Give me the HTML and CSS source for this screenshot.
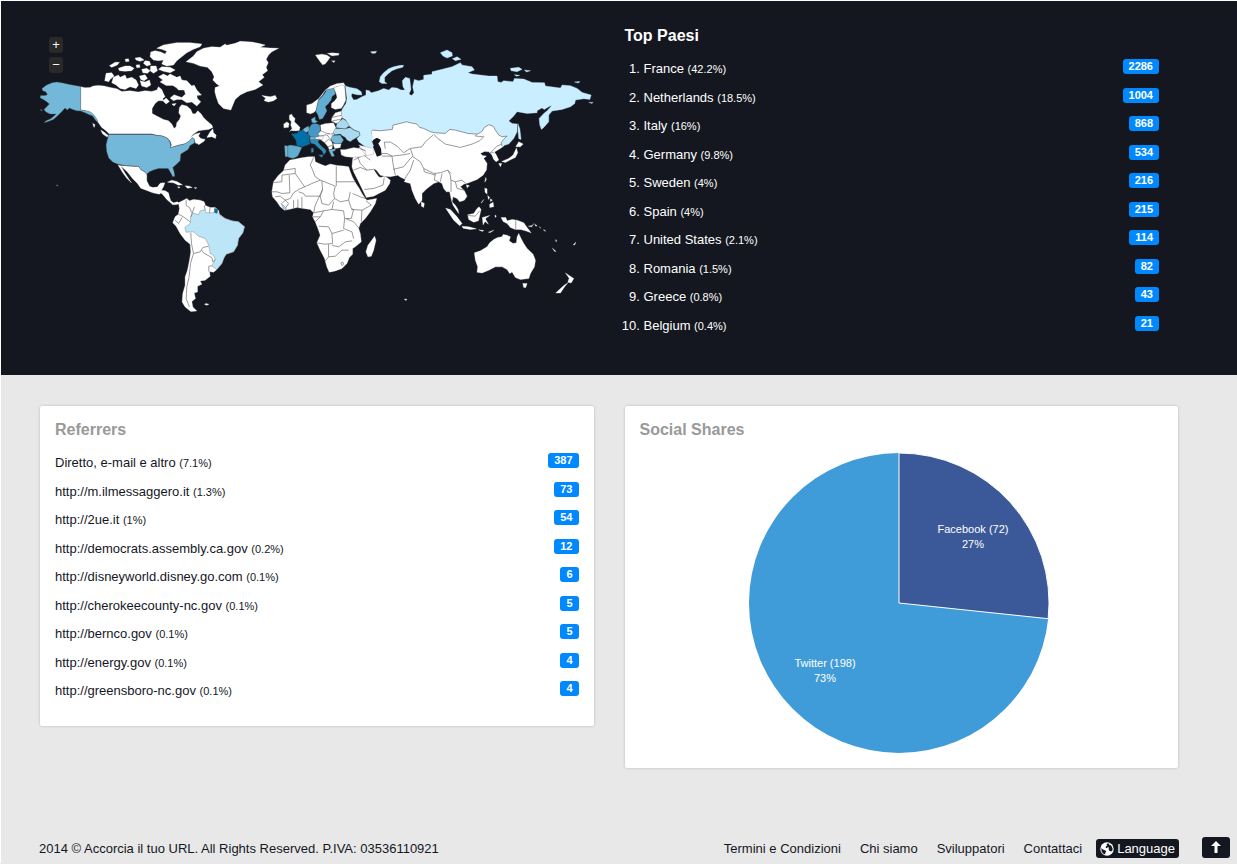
FILE: index.html
```html
<!DOCTYPE html>
<html lang="it">
<head>
<meta charset="utf-8">
<title>Statistiche</title>
<link rel="stylesheet" href="styles.css">
</head>
<body>
<section class="hero">
  <div class="columns">
    <div class="map">
      <svg class="map-art" viewBox="40 30 553 300" role="img" aria-label="Mappa dei paesi">
        <!-- North America -->
        <g transform="translate(30 30) scale(.33333)">
          <path class="land" d="M152,170 165,173 180,172 190,168 205,166 222,168 240,172 260,176 275,184 300,182 325,186 345,182 365,184 380,180 385,170 395,178 400,190 405,200 398,205 400,212 385,212 375,220 366,235 366,250 380,258 400,268 415,272 425,282 432,295 438,290 440,278 448,268 452,258 446,248 448,232 455,224 470,228 482,238 487,250 495,252 503,242 512,250 520,262 530,272 545,285 548,292 535,298 520,300 505,302 490,312 480,322 495,312 510,308 505,318 512,325 525,328 520,335 505,338 497,340 492,325 486,322 478,332 465,340 445,345 420,352 425,345 420,332 410,322 395,316 380,315 365,311 237,311 228,302 215,292 205,278 200,268 192,256 180,246 165,241 152,239Z"/>
          <path class="land" d="M530,322 540,305 548,296 550,308 558,315 556,325 545,320ZM500,338 515,330 522,330 515,338 505,344ZM212,300 222,306 236,318 230,320 218,312ZM188,280 195,284 192,292Z"/>
          <path class="land" d="M380,55 400,45 440,38 480,38 515,42 510,50 490,58 470,68 455,80 440,92 430,105 410,108 395,102 400,90 385,92 370,90 360,80 362,66 375,62 392,66 405,72 410,64 395,58ZM395,110 420,112 435,120 420,128 400,124 385,118ZM238,107 255,97 268,97 262,105 245,112ZM265,115 285,108 300,108 312,115 305,122 285,124 268,122ZM285,88 295,86 297,94 287,95ZM315,84 330,82 342,90 330,94 318,90ZM345,92 358,94 362,104 350,108 340,100ZM318,105 328,104 330,112 320,113ZM228,130 245,128 252,138 240,148 236,155 224,152ZM250,142 265,135 270,142 285,135 290,146 305,142 318,150 325,165 318,175 300,170 285,178 270,175 258,165 245,158ZM335,118 350,115 360,122 352,130 338,128ZM328,138 345,134 352,145 342,152 332,148ZM330,152 345,156 358,150 362,165 350,172 335,168ZM362,108 378,108 382,122 370,130 360,122ZM398,212 408,204 418,214 408,222ZM425,222 438,220 432,228Z"/>
          <path class="land" d="M385,140 400,132 412,138 420,132 440,142 450,138 455,150 470,152 485,168 492,165 500,180 514,195 500,196 502,206 512,215 500,228 485,216 470,218 455,208 440,208 430,212 420,204 432,194 442,198 455,202 466,192 462,180 445,180 440,174 428,166 408,166 390,156 398,150Z"/>
          <path class="us" d="M36,175 50,165 66,158 80,156 95,158 118,163 152,169 152,239 165,242 175,243 185,248 193,256 201,268 204,278 196,270 188,258 178,254 165,248 152,243 140,242 128,238 118,234 112,240 105,234 95,245 82,258 70,268 55,274 42,278 48,272 62,266 72,258 78,252 60,252 48,246 42,238 50,230 58,222 50,215 40,208 30,203 32,196 45,196 52,194 48,186 38,182ZM31,238 37,240 34,243Z"/>
          <path class="us" d="M236,313 365,313 380,316 395,318 408,322 418,332 422,345 420,353 445,346 465,341 478,332 486,322 492,327 494,338 480,346 474,358 462,366 452,372 450,392 440,402 428,412 432,425 434,438 428,440 420,425 414,415 400,415 385,415 370,420 358,425 350,432 343,424 332,418 325,408 312,408 300,407 285,406 262,402 248,396 236,384 230,365 228,345 232,328ZM79,464 85,466 81,468Z"/>
          <path class="land" d="M272,407 285,408 312,410 325,410 332,420 343,426 350,434 350,452 358,468 370,473 384,470 390,460 404,458 400,470 394,480 388,492 378,490 368,488 348,480 332,474 322,460 308,446 292,426ZM264,405 272,407 284,428 296,446 304,458 290,444 278,428Z"/>
        </g>
        <!-- Greenland and Iceland -->
        <g transform="translate(180 30) scale(.33333)">
          <path class="land" d="M35,82 18,95 40,100 60,108 82,112 95,125 102,140 98,150 108,160 118,168 105,172 104,185 108,200 115,220 130,235 152,240 158,225 165,208 180,195 200,185 225,178 248,165 235,155 252,142 246,134 262,122 258,112 264,98 258,88 265,75 275,65 295,55 270,54 240,52 255,45 235,40 215,36 180,34 165,40 140,46 135,42 120,52 95,50 70,55 50,65 40,78ZM245,196 255,198 270,200 285,196 290,205 280,212 265,216 252,212 256,204Z"/>
        </g>
        <!-- South and Central America -->
        <g transform="translate(150 170) scale(.33333)">
          <path class="land" d="M0,55 12,52 22,52 28,42 38,38 42,42 34,50 32,60 45,62 55,68 58,80 62,92 70,98 82,95 88,100 80,103 68,104 58,95 50,88 42,78 35,70 22,68 10,65 0,60ZM52,36 65,30 80,34 97,44 85,45 70,38ZM105,47 118,48 126,52 112,54ZM82,50 90,51 86,54ZM132,52 140,53 136,56ZM163,402 168,400 176,402 170,405Z"/>
          <path class="land" d="M110,85 118,92 130,88 150,90 162,95 166,106 180,112 195,112 205,120 208,132 225,145 245,152 265,155 283,170 278,188 265,205 262,225 250,245 228,252 222,262 215,280 200,298 190,306 178,304 180,318 165,330 150,332 155,342 142,348 142,365 132,368 136,385 125,394 128,410 140,422 122,424 105,410 96,395 98,370 105,345 105,320 112,300 118,270 122,245 120,222 105,210 90,190 78,168 68,158 75,140 85,132 88,115 85,98 100,90Z"/>
          <path class="br" d="M128,128 145,134 150,122 165,118 168,128 185,128 203,126 212,138 225,145 245,152 265,155 283,170 278,188 265,205 262,225 250,245 228,252 222,262 215,280 200,298 185,287 195,268 190,255 180,250 176,225 165,205 145,198 130,185 108,186 104,172 120,160 122,140Z"/>
          <path class="fr" d="M193,114 204,118 200,130 192,126Z"/>
          <path class="border" d="M122,188 124,220 130,250 121,280 117,320 110,350 108,385 118,410M130,250 150,245 158,232 175,228M155,240 160,248 185,262 188,275 195,268M176,304V288L185,287M85,132 100,140 120,155M125,128 118,112 108,106 108,90M165,118 162,108 166,106M75,150 85,160 96,142M178,128 180,112M122,140 133,110"/>
        </g>
        <!-- Africa -->
        <g transform="translate(265 150) scale(.33333)">
          <path class="land" d="M74,30 85,28 105,24 130,20 148,20 150,35 165,42 180,48 195,42 215,46 235,48 250,50 255,65 262,82 272,100 282,115 290,130 300,145 305,150 334,145 330,160 315,185 300,205 285,220 280,235 285,250 288,275 270,290 262,295 262,312 252,322 245,340 230,355 210,362 192,366 185,350 178,325 165,300 155,278 165,255 158,235 150,215 142,200 145,188 135,178 115,175 95,172 70,178 58,180 45,170 35,155 22,140 20,125 25,95 40,75 55,62 60,45ZM328,258 332,270 325,300 318,318 308,320 302,305 308,285 318,272Z"/>
          <path class="by" d="M48,160 62,172 64,180 54,174Z"/>
          <path class="border" d="M55,60 90,55V70L50,75V95L25,97M72,75 74,128 50,130 35,125 20,125M90,70 118,110 100,118 85,128 75,145 60,150 50,160M118,110 140,100 165,90 150,80 140,55 135,45 145,22M165,90 210,108M213,48V108M213,95H270M170,92 172,118 165,138 120,138 115,130 100,125M165,138 170,160 190,165 208,145 205,130 210,108M145,188 175,182 200,178 205,155M208,145 225,155 250,150 258,175 265,178M200,178 235,182 238,205 235,235M160,228 190,230 200,250 235,240M155,278 180,282 202,280 200,250M190,282V320L180,332M200,285 220,290 240,275 260,272M190,320 210,318 230,300 250,300M258,178 290,180 288,215M240,205 265,215 282,235M235,235 260,245 265,265M110,140V174M85,150V174M98,148V174M150,215 165,200 175,182M142,200 165,200M172,118 150,165 145,188M62,172 70,160 60,150M255,125 250,150M262,130 285,140 300,145M290,180 318,165 302,152M30,140 45,138 60,150M227,338l6,-2 2,6 -5,4ZM265,178 258,205 240,205"/>
        </g>
        <!-- Asia and Oceania -->
        <g transform="translate(360 120) scale(.33333)">
          <path class="land" d="M-23,118 -25,140 -20,155 -5,185 5,205 12,220 18,232 40,228 60,218 75,210 88,190 90,180 80,172 72,168 62,172 55,170 48,160 38,145 48,150 60,165 75,168 90,170 112,165 122,172 135,178 132,185 150,190 155,210 165,235 175,252 185,240 185,220 200,205 220,190 235,185 245,190 250,205 258,215 268,215 272,235 278,255 288,270 295,280 293,268 285,255 275,245 278,230 290,235 298,245 312,240 320,228 312,212 300,200 310,192 325,188 350,178 368,165 378,150 380,130 370,115 378,108 366,106 360,100 372,94 385,95 394,104 400,118 407,125 415,120 408,105 402,96 420,85 430,78 440,50 398,10 285,25 138,0 35,25 33,60 40,78 0,80 -18,100Z"/>
          <path class="sea" d="M40,58 50,53 62,60 54,70 62,85 64,105 50,110 44,95 38,80 33,68Z"/>
          <path class="land" d="M183,245 192,250 190,262 183,258ZM318,194 327,197 320,203ZM376,172 378,178 373,186ZM475,65 488,72 480,80 466,80ZM468,84 472,98 465,112 450,119 435,127 424,124 445,115 458,105ZM415,130 424,130 420,140ZM373,204 380,206 380,222 374,216ZM382,226 388,232 384,238ZM390,236 396,240 390,244ZM388,252 398,246 400,260 388,262ZM362,248 370,238 364,248ZM256,264 270,268 290,290 305,310 298,317 280,300 268,282ZM305,318 325,320 348,326 330,328 308,324ZM322,284 340,280 350,265 356,260 362,268 358,285 354,302 340,306 325,298ZM366,292 388,286 376,294 376,298 384,312 374,304 368,314ZM355,329 370,331 366,334ZM384,336 400,330 390,337ZM404,284 408,288 404,292ZM422,292 436,292 440,302 455,298 470,300 490,308 500,322 512,338 495,332 480,328 465,328 450,322 440,310 428,304ZM504,318 516,316 520,310 514,320ZM523,312 530,317 526,318ZM536,320 542,324ZM550,328 556,333 550,331ZM586,358 589,363 586,364ZM576,384 587,394 582,393ZM638,374 646,366 643,374Z"/>
          <path class="land" d="M342,398 360,392 380,380 388,368 400,358 412,352 425,350 428,343 440,345 450,350 446,362 458,370 468,368 470,350 475,340 482,355 490,370 500,385 518,402 525,420 522,440 510,460 505,475 480,478 465,472 455,455 448,460 440,448 425,440 405,440 385,450 365,458 350,456 352,440 345,420ZM487,490 500,490 496,502 490,502ZM615,458 625,465 640,475 632,488 622,486 626,474ZM622,488 612,500 600,518 586,518 600,505 612,494ZM132,537 140,537 137,541Z"/>
          <path class="border" d="M75,86 72,66 90,66 110,78 130,98 150,85 185,80 195,65 218,45M220,42 232,55 255,72 300,82 335,72 358,62 370,50 345,48 350,42M158,110 180,125 190,145 220,160 240,158 262,150 272,160M-10,105 0,130 20,150 38,148M65,108 95,108 98,130 105,165M98,148 130,140 150,115 158,108 150,85M132,178 150,150 160,120M64,100 80,100 95,108 130,104 150,100M245,160 240,185M225,160 222,180 235,185M262,150 270,165 272,185 272,215M272,180 285,185 305,180 316,190M285,185 290,205 310,210M-20,120 10,105 30,120M12,208 40,205 68,195 72,172M-20,150 0,142 20,150M400,98 390,98 410,78 425,72M466,300V328M322,286 345,288 358,272M190,145 192,155 225,165"/>
        </g>
        <!-- Russia -->
        <g transform="translate(380 40) scale(.33333)">
          <path class="ru" d="M-105,138 -90,142 -70,146 -57,155 -55,165 -70,164 -85,160 -87,168 -80,180 -70,178 -55,170 -43,165 -43,150 -33,152 -27,158 -5,152 10,145 25,150 35,142 50,144 62,150 74,150 68,140 66,122 75,112 88,115 90,130 92,148 86,162 94,166 101,158 97,140 102,118 115,122 130,118 130,106 155,103 155,95 185,88 215,80 240,68 245,75 275,80 282,90 262,98 275,102 300,105 325,108 350,108 352,125 362,127 370,122 398,125 402,115 430,117 455,127 492,128 495,138 540,144 545,135 570,137 590,145 605,157 632,165 628,178 610,176 585,180 583,190 570,200 545,208 515,213 505,225 505,245 490,262 483,268 478,255 476,235 490,220 500,212 514,196 505,200 492,208 484,204 470,212 470,218 440,220 410,215 400,228 385,243 395,250 410,252 410,275 400,295 385,312 365,318 362,308 368,300 380,288 365,290 355,285 345,270 338,258 325,254 312,262 304,275 290,282 262,280 225,270 208,268 195,280 165,278 150,275 130,265 118,262 110,252 90,248 78,245 60,250 38,255 36,268 0,272 -25,270 -27,280 -20,290 -27,300 -20,318 -27,322 -45,320 -65,305 -70,295 -60,285 -63,275 -80,268 -87,262 -97,255 -103,240 -115,232 -117,215 -113,205 -103,190 -100,175Z"/>
          <path class="border" d="M365,318 362,308 368,300 380,288 365,290 355,285 345,270 338,258 325,254 312,262 304,275 290,282 262,280 225,270 208,268 195,280 165,278 150,275 130,265 118,262 110,252 90,248 78,245 60,250 38,255 36,268 0,272 -25,270"/>
          <path class="ru" d="M180,38 200,30 215,38 216,48 200,54 188,48ZM216,56 230,50 242,58 225,62ZM390,85 415,82 425,88 410,95 392,92ZM432,90 450,92 438,96ZM402,104 418,106 408,109ZM582,126 598,124 594,129ZM625,187 638,187 634,190ZM412,250 418,265 420,280 422,298 415,296 413,275Z"/>
        </g>
        <!-- Europe -->
        <g class="europe" transform="translate(265 40) scale(.33333)">
          <path class="ru" d="M316,35 334,34 330,40 320,40ZM342,125 345,110 355,98 370,86 385,80 405,76 415,76 412,82 395,86 380,92 368,102 358,112 358,125 365,130 350,130Z"/>
          <path class="land" d="M150,45 170,42 185,45 195,52 188,62 180,72 172,75 162,62ZM185,40 200,38 222,40 220,46 200,48ZM198,62 210,62 206,68ZM72,225 80,222 82,228 90,235 88,245 98,255 105,262 102,272 90,273 78,272 72,275 80,265 76,255 78,245 72,238ZM55,252 65,245 72,250 70,262 56,264Z"/>
          <path class="land" d="M124,218 124,195 140,190 160,175 180,150 195,138 215,130 235,128 241,138 230,140 215,140 205,145 190,148 180,152 172,165 160,178 156,195 152,212 145,218 135,222Z"/>
          <path class="se" d="M205,145 185,148 178,160 170,170 160,180 156,195 152,215 158,225 162,238 172,236 180,222 185,212 180,200 190,190 198,180 200,170 210,162 208,150Z"/>
          <path class="land" d="M205,142 215,140 230,134 238,138 240,155 242,180 235,195 228,205 210,208 198,203 198,190 208,182 215,172 212,160 208,150Z"/>
          <path class="land" d="M210,218 228,213 230,232 222,247 212,250 205,246 198,243 200,232ZM165,255 180,250 205,248 212,262 208,280 195,282 180,278 167,272ZM167,272 190,282 208,282 202,290 198,300 203,315 200,327 192,330 188,320 178,308 165,298 158,292 158,280ZM203,310 228,311 225,323 208,326ZM225,328 240,328 265,322 285,325 300,330 302,345 285,350 262,352 240,350 228,345ZM280,314 300,320 325,325 325,342 302,347ZM135,300 155,288 175,288 172,298 150,300Z"/>
          <path class="by" d="M222,245 232,236 243,242 252,258 240,266 220,264 212,262 215,250ZM210,265 240,266 255,262 265,270 282,276 284,286 272,294 262,300 255,305 245,300 240,292 232,288 225,282 210,284 203,278Z"/>
          <path class="de" d="M132,262 140,252 150,250 163,254 166,272 158,280 163,288 150,292 135,290 128,280Z"/>
          <path class="us" d="M138,237 150,230 150,240 158,245 148,249 140,247ZM118,264 130,258 132,272 122,278 112,270ZM134,291 150,291 150,298 134,299ZM200,286 225,285 235,300 228,310 210,311 198,302ZM190,330 208,326 212,330 202,335 208,348 200,350 195,340ZM58,316 68,318 68,350 60,350Z"/>
          <path class="fr" d="M78,282 95,280 100,274 112,270 122,278 134,286 132,295 134,312 122,316 112,320 95,316 92,300 85,290Z"/>
          <path class="se" d="M68,317 75,315 95,318 110,322 104,335 98,348 84,355 72,352 68,350Z"/>
          <path class="itl" d="M134,300 150,297 162,298 158,306 168,318 182,330 182,336 176,344 170,332 158,322 148,312 138,310ZM160,345 174,344 170,352ZM138,325 144,324 145,336 138,337Z"/>
          <path class="border" d="M200,232 228,226M202,242 226,238M163,288 185,284 198,300M178,308 190,298 200,303M188,320 203,315M283,325 300,332"/>
        </g>
      </svg>
      <div class="zoom">
        <button class="zoom-button" type="button" aria-label="Ingrandisci">+</button>
        <button class="zoom-button" type="button" aria-label="Riduci">−</button>
      </div>
    </div>
    <div class="countries">
      <h2 class="title">Top Paesi</h2>
      <ol class="list list-countries">
        <li><span class="badge">2286</span>France <small>(42.2%)</small></li>
        <li><span class="badge">1004</span>Netherlands <small>(18.5%)</small></li>
        <li><span class="badge">868</span>Italy <small>(16%)</small></li>
        <li><span class="badge">534</span>Germany <small>(9.8%)</small></li>
        <li><span class="badge">216</span>Sweden <small>(4%)</small></li>
        <li><span class="badge">215</span>Spain <small>(4%)</small></li>
        <li><span class="badge">114</span>United States <small>(2.1%)</small></li>
        <li><span class="badge">82</span>Romania <small>(1.5%)</small></li>
        <li><span class="badge">43</span>Greece <small>(0.8%)</small></li>
        <li><span class="badge">21</span>Belgium <small>(0.4%)</small></li>
      </ol>
    </div>
  </div>
</section>
<main class="columns panels">
  <section class="card">
    <h2 class="title">Referrers</h2>
    <ul class="list list-referrers">
      <li><span class="badge">387</span>Diretto, e-mail e altro <small>(7.1%)</small></li>
      <li><span class="badge">73</span><a href="#">http://m.ilmessaggero.it</a> <small>(1.3%)</small></li>
      <li><span class="badge">54</span><a href="#">http://2ue.it</a> <small>(1%)</small></li>
      <li><span class="badge">12</span><a href="#">http://democrats.assembly.ca.gov</a> <small>(0.2%)</small></li>
      <li><span class="badge">6</span><a href="#">http://disneyworld.disney.go.com</a> <small>(0.1%)</small></li>
      <li><span class="badge">5</span><a href="#">http://cherokeecounty-nc.gov</a> <small>(0.1%)</small></li>
      <li><span class="badge">5</span><a href="#">http://bernco.gov</a> <small>(0.1%)</small></li>
      <li><span class="badge">4</span><a href="#">http://energy.gov</a> <small>(0.1%)</small></li>
      <li><span class="badge">4</span><a href="#">http://greensboro-nc.gov</a> <small>(0.1%)</small></li>
    </ul>
  </section>
  <section class="card">
    <h2 class="title">Social Shares</h2>
    <svg class="pie" viewBox="0 0 302 302" role="img" aria-label="Social Shares">
      <circle class="slice-twitter" cx="151" cy="151" r="150"/>
      <path class="slice-facebook" d="M151,151V1A150,150 0 0 1 300.2,166.7Z"/>
      <text x="225" y="81">Facebook (72)</text>
      <text x="225" y="96">27%</text>
      <text x="77" y="215">Twitter (198)</text>
      <text x="77" y="230">73%</text>
    </svg>
  </section>
</main>
<footer class="footer">
  <p class="copyright">2014 © Accorcia il tuo URL. All Rights Reserved. P.IVA: 03536110921</p>
  <nav class="links">
    <a href="#">Termini e Condizioni</a>
    <a href="#">Chi siamo</a>
    <a href="#">Sviluppatori</a>
    <a href="#">Contattaci</a>
  </nav>
  <button class="language" type="button">
    <svg class="globe" viewBox="0 0 14 14" aria-hidden="true">
      <circle cx="7" cy="7" r="6.7" fill="#fff"/>
      <path fill="#14171f" d="M7.4,1.4 9.6,1.8 9,3.2 10.4,3 11.6,4.2 12.6,6.4 12.4,8.4 11.2,9.4 9.4,8.8 8.6,7.4 9,5.6 7.6,5.2 6.8,6.2 5.6,5.6 6,4.2 7.4,3.2 6.4,2.4ZM1.4,6 3,7.4 5.4,8.4 6.2,9.6 5.2,11 5.2,12.6 3,11.4 1.6,9.4Z"/>
    </svg>
    Language
  </button>
</footer>
<button class="to-top" type="button" aria-label="Torna su">
  <svg class="arrow" viewBox="0 0 10 12" aria-hidden="true"><path fill="#fff" d="M5,0 10,5H6.5V12H3.5V5H0Z"/></svg>
</button>
</body>
</html>
```
FILE: styles.css
```css
* {
  box-sizing: border-box;
}

body {
  margin: 0;
  border-top: 1px solid #fff;
  border-left: 1px solid #fff;
  background: #e8e8e8;
  color: #14171f;
  font: 13px/20px "Liberation Sans", Arial, sans-serif;
}

a {
  color: inherit;
  text-decoration: none;
}

button {
  border: 0;
  padding: 0;
  background: #14171f;
  color: #fff;
  font: inherit;
  cursor: pointer;
}

.columns {
  display: grid;
  grid-template-columns: 1fr 1fr;
  gap: 31px;
  align-items: start;
  padding: 0 59px 0 39px;
}

.hero {
  padding: 25px 0 35px;
  background: #14171f;
  color: #fff;
}

.map {
  position: relative;
  padding-top: 4px;
}

.map-art {
  display: block;
  width: 100%;
}

.us, .br, .fr, .se, .de, .by, .itl {
  stroke: #555;
  stroke-width: 1;
}

.land {
  fill: #fff;
  stroke: #fff;
  stroke-width: 1;
}

.europe .land {
  stroke: #777;
}

.sea {
  fill: #14171f;
}

.border {
  fill: none;
  stroke: #666;
  stroke-width: 2;
}

.us {
  fill: #73b8d8;
}

.br {
  fill: #bde5f8;
}

.ru {
  fill: #c8eeff;
  stroke: #c8eeff;
}

.fr {
  fill: #0071a8;
}

.se {
  fill: #62aed2;
}

.de {
  fill: #4698c4;
}

.by {
  fill: #aadaf0;
}

.itl {
  fill: #2f8dbd;
}

.zoom {
  position: absolute;
  top: 11px;
  left: 9px;
  display: grid;
  gap: 4px;
}

.zoom-button {
  width: 14px;
  height: 16px;
  border-radius: 3px;
  background: #292929;
  line-height: 16px;
}

.title {
  margin: 0;
  font-size: 16px;
  line-height: 20px;
}

.countries {
  padding-right: 19px;
}

.list {
  display: grid;
  grid-auto-rows: 1fr;
  margin: 0;
  padding: 0;
}

.list li {
  line-height: 28px;
}

.list small {
  font-size: 11px;
}

.list-countries {
  height: 285px;
  margin-top: 9px;
  padding-left: 19px;
}

.list-referrers {
  height: 257px;
  margin-top: 9px;
  list-style: none;
}

.badge {
  float: right;
  height: 15px;
  margin-top: 4px;
  padding: 0 6px;
  border-radius: 3px;
  background: #08f;
  color: #fff;
  font-size: 11px;
  font-weight: bold;
  line-height: 14px;
}

.panels {
  padding-top: 31px;
}

.card {
  padding: 14px 15px 20px;
  border-radius: 2px;
  background: #fff;
  box-shadow: 0 0 3px rgba(0, 0, 0, 0.2);
}

.card .title {
  color: #999;
}

.pie {
  display: block;
  width: 306px;
  max-width: 100%;
  height: 302px;
  margin: 12px auto -6px;
  padding-right: 4px;
}

.pie text {
  fill: #fff;
  font-size: 11px;
  text-anchor: middle;
}

.slice-twitter {
  fill: #409cd8;
}

.slice-facebook {
  fill: #3b5998;
  stroke: #fff;
}

.footer {
  display: flex;
  align-items: center;
  padding: 69px 58px 4px 38px;
}

.copyright {
  flex: 1;
  margin: 0;
  padding-top: 2px;
}

.links {
  display: flex;
  gap: 19px;
  margin-right: 14px;
  padding-top: 2px;
}

.language {
  display: flex;
  align-items: center;
  gap: 3px;
  height: 19px;
  padding: 1px 4px 0;
  border-radius: 3px;
}

.globe {
  width: 14px;
}

.to-top {
  position: fixed;
  right: 7px;
  bottom: 6px;
  display: flex;
  align-items: center;
  justify-content: center;
  width: 28px;
  height: 21px;
  border-radius: 3px;
}

.arrow {
  width: 10px;
  margin-bottom: 2px;
}
```
